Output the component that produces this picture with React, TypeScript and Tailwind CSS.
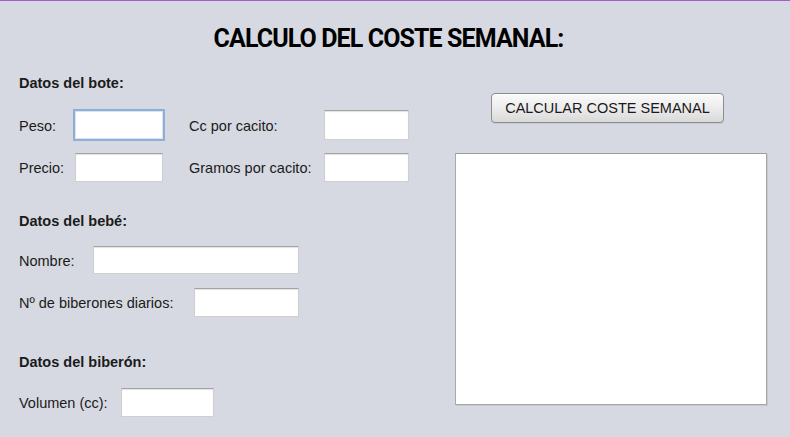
import React from "react";

const field =
  "bg-white border border-[#cfcfcf] border-t-[#a3a3a3] shadow-[inset_0_1px_1px_rgba(0,0,0,0.12)] outline-none";

function Input({ w, h = 29, focused = false }: { w: number; h?: number; focused?: boolean }) {
  if (focused) {
    return (
      <div
        className="bg-white border-2 border-[#8fb0d6] shadow-[inset_0_0_0_1px_#d9e4f1]"
        style={{ width: w, height: h }}
      />
    );
  }
  return <div className={field} style={{ width: w, height: h }} />;
}

export default function App() {
  return (
    <div
      className="w-[790px] h-[437px] bg-[#d6d9e1] border-t border-[#a65bc8] text-[#1b1b1b] overflow-hidden"
      style={{ fontFamily: '"Liberation Sans", Arial, sans-serif' }}
    >
      <div className="h-[69px] pt-[23px] pr-[13px]">
        <h1
          className="text-center text-[25px] leading-[30px] font-bold text-black tracking-[-0.9px]"
          style={{ fontFamily: "Roboto, sans-serif" }}
        >
          CALCULO DEL COSTE SEMANAL:
        </h1>
      </div>

      <div className="flex">
        {/* Left column */}
        <div className="w-[455px] pl-[19px] text-[14.5px]">
          <div className="h-[24px] flex items-center pt-[3px] font-bold">Datos del bote:</div>

          <div className="mt-[15px] h-[32px] flex items-center">
            <span className="w-[54px] pt-[3px]">Peso:</span>
            <Input w={92} h={32} focused />
            <span className="ml-[24px] w-[135px] pt-[3px]">Cc por cacito:</span>
            <Input w={85} h={30} />
          </div>

          <div className="mt-[12px] h-[29px] flex items-center">
            <span className="w-[56px] pt-[3px]">Precio:</span>
            <Input w={88} h={29} />
            <span className="ml-[26px] w-[135px] pt-[3px]">Gramos por cacito:</span>
            <Input w={85} h={29} />
          </div>

          <div className="mt-[26px] h-[24px] flex items-center pt-[3px] font-bold">Datos del bebé:</div>

          <div className="mt-[14px] h-[28px] flex items-center">
            <span className="w-[74px] pt-[3px]">Nombre:</span>
            <Input w={206} h={28} />
          </div>

          <div className="mt-[14px] h-[29px] flex items-center">
            <span className="w-[175px] pt-[3px]">Nº de biberones diarios:</span>
            <Input w={105} h={29} />
          </div>

          <div className="mt-[32px] h-[24px] flex items-center pt-[3px] font-bold">Datos del biberón:</div>

          <div className="mt-[15px] h-[29px] flex items-center">
            <span className="w-[102px] pt-[3px]">Volumen (cc):</span>
            <Input w={93} h={29} />
          </div>
        </div>

        {/* Right column */}
        <div className="flex flex-col pt-[23px]">
          <button
            className="ml-[36px] w-[233px] h-[30px] pt-[2px] rounded-[4px] border border-[#8d8d8d] bg-gradient-to-b from-[#fafafa] via-[#ececec] to-[#d9d9d9] shadow-[inset_0_1px_0_#ffffff,0_1px_0_rgba(0,0,0,0.08)] text-[14.5px] text-[#1a1a1a] flex items-center justify-center"
          >
            CALCULAR COSTE SEMANAL
          </button>
          <div className="mt-[30px] w-[312px] h-[252px] bg-white border border-[#a7a7a7] border-t-[#9c9c9c] border-l-[#a9a9a9] shadow-[1px_1px_0_rgba(0,0,0,0.08)]" />
        </div>
      </div>
    </div>
  );
}
